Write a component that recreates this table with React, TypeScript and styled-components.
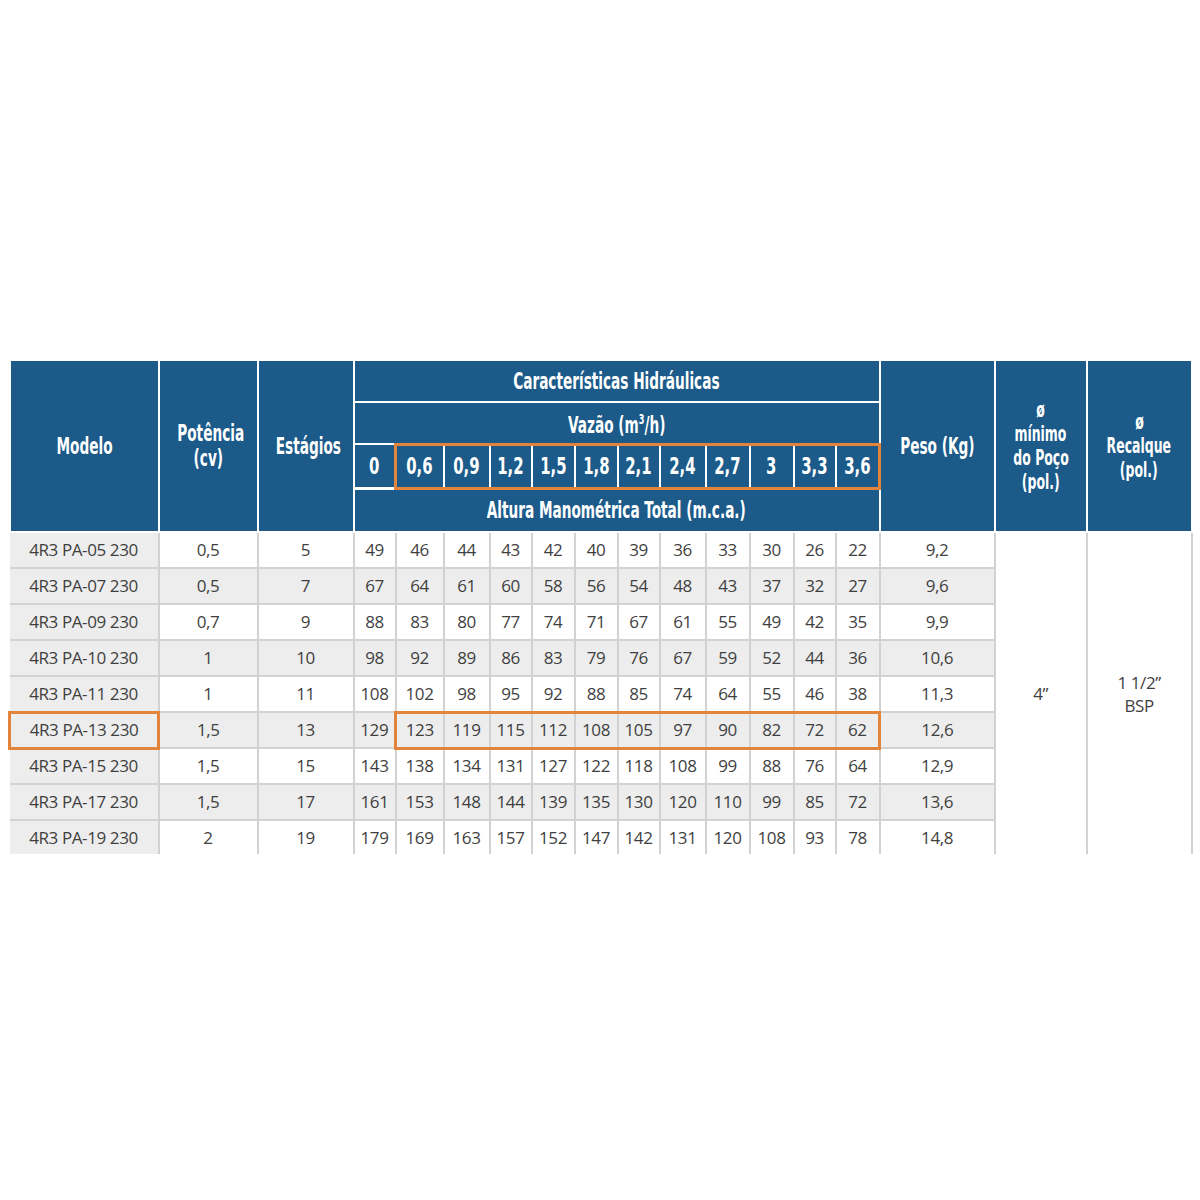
import React from "react";
import styled, { createGlobalStyle, css } from "styled-components";

const GlobalStyle = createGlobalStyle`
  html, body { margin: 0; padding: 0; background: #ffffff; }
  body { font-family: "Open Sans", "Liberation Sans", sans-serif; }
`;

const BLUE = "#1b5a89";
const ORANGE = "#e3843c";
const GRID = "#d2d2d2";
const STRIPE = "#ededed";

const Page = styled.div`
  width: 1200px;
  height: 1200px;
  padding: 359px 0 0 8px;
  box-sizing: border-box;
`;

const Table = styled.table`
  border-collapse: collapse;
  table-layout: fixed;
  width: 1182px;
`;

type Edge = { hlTop?: boolean; hlBottom?: boolean; hlLeft?: boolean; hlRight?: boolean };

const edges = css<Edge>`
  ${(p) => p.hlTop && `border-top: 3px solid ${ORANGE};`}
  ${(p) => p.hlBottom && `border-bottom: 3px solid ${ORANGE};`}
  ${(p) => p.hlLeft && `border-left: 3px solid ${ORANGE};`}
  ${(p) => p.hlRight && `border-right: 3px solid ${ORANGE};`}
`;

const HeadCell = styled.th<Edge & { $small?: boolean }>`
  background: ${BLUE};
  color: #ffffff;
  border: 2px solid #ffffff;
  padding: 0;
  text-align: center;
  vertical-align: middle;
  font-family: "DejaVu Sans Condensed", "DejaVu Sans", sans-serif;
  font-stretch: condensed;
  font-weight: 700;
  font-size: ${(p) => (p.$small ? "21px" : "23px")};
  line-height: ${(p) => (p.$small ? "24px" : "25px")};
  white-space: nowrap;
  overflow: hidden;
  ${edges}
`;

const Squeeze = styled.span<{ $x?: number }>`
  display: inline-block;
  transform: scaleX(${(p) => p.$x ?? 0.66});
  transform-origin: center;
`;

const Sup = styled.sup`
  font-size: 0.6em;
`;

const HeadRow = styled.tr<{ $h: number }>`
  height: ${(p) => p.$h}px;
`;

const BodyRow = styled.tr<{ $stripe: boolean; $h: number }>`
  height: ${(p) => p.$h}px;
  background: ${(p) => (p.$stripe ? STRIPE : "#ffffff")};
`;

const Cell = styled.td<Edge & { $model?: boolean; $merged?: boolean }>`
  border: 2px solid ${GRID};
  padding: 0;
  text-align: center;
  vertical-align: middle;
  color: #3f3f3f;
  font-family: "Open Sans", "Liberation Sans", sans-serif;
  font-size: 17px;
  letter-spacing: -0.4px;
  line-height: 20px;
  white-space: nowrap;
  ${(p) => p.$model && `background: ${STRIPE}; border-left: none;`}
  ${(p) => p.$merged && `background: #ffffff; border-bottom: none; line-height: 23px;`}
  ${edges}
`;

const LastRowCell = styled(Cell)`
  border-bottom: none;
`;

const flows = ["0", "0,6", "0,9", "1,2", "1,5", "1,8", "2,1", "2,4", "2,7", "3", "3,3", "3,6"];
const flowWidths = [42, 48, 46, 42, 43, 43, 42, 46, 44, 44, 42, 44];

type Row = [string, string, string, number[], string];
const rows: Row[] = [
  ["4R3 PA-05 230", "0,5", "5", [49, 46, 44, 43, 42, 40, 39, 36, 33, 30, 26, 22], "9,2"],
  ["4R3 PA-07 230", "0,5", "7", [67, 64, 61, 60, 58, 56, 54, 48, 43, 37, 32, 27], "9,6"],
  ["4R3 PA-09 230", "0,7", "9", [88, 83, 80, 77, 74, 71, 67, 61, 55, 49, 42, 35], "9,9"],
  ["4R3 PA-10 230", "1", "10", [98, 92, 89, 86, 83, 79, 76, 67, 59, 52, 44, 36], "10,6"],
  ["4R3 PA-11 230", "1", "11", [108, 102, 98, 95, 92, 88, 85, 74, 64, 55, 46, 38], "11,3"],
  ["4R3 PA-13 230", "1,5", "13", [129, 123, 119, 115, 112, 108, 105, 97, 90, 82, 72, 62], "12,6"],
  ["4R3 PA-15 230", "1,5", "15", [143, 138, 134, 131, 127, 122, 118, 108, 99, 88, 76, 64], "12,9"],
  ["4R3 PA-17 230", "1,5", "17", [161, 153, 148, 144, 139, 135, 130, 120, 110, 99, 85, 72], "13,6"],
  ["4R3 PA-19 230", "2", "19", [179, 169, 163, 157, 152, 147, 142, 131, 120, 108, 93, 78], "14,8"],
];

const HIGHLIGHT_ROW = 5;

export default function App() {
  return (
    <>
      <GlobalStyle />
      <Page>
        <Table>
          <colgroup>
            <col style={{ width: 149 }} />
            <col style={{ width: 99 }} />
            <col style={{ width: 96 }} />
            {flowWidths.map((w, i) => (
              <col key={i} style={{ width: w }} />
            ))}
            <col style={{ width: 115 }} />
            <col style={{ width: 92 }} />
            <col style={{ width: 105 }} />
          </colgroup>
          <thead>
            <HeadRow $h={42}>
              <HeadCell rowSpan={4}>
                <Squeeze>Modelo</Squeeze>
              </HeadCell>
              <HeadCell rowSpan={4}>
                <Squeeze>Potência</Squeeze>
                <br />
                <Squeeze>(cv)</Squeeze>
              </HeadCell>
              <HeadCell rowSpan={4}>
                <Squeeze>Estágios</Squeeze>
              </HeadCell>
              <HeadCell colSpan={12}>
                <Squeeze>Características Hidráulicas</Squeeze>
              </HeadCell>
              <HeadCell rowSpan={4}>
                <Squeeze>Peso (Kg)</Squeeze>
              </HeadCell>
              <HeadCell rowSpan={4} $small>
                <Squeeze>ø</Squeeze>
                <br />
                <Squeeze>mínimo</Squeeze>
                <br />
                <Squeeze>do Poço</Squeeze>
                <br />
                <Squeeze>(pol.)</Squeeze>
              </HeadCell>
              <HeadCell rowSpan={4} $small>
                <Squeeze>ø</Squeeze>
                <br />
                <Squeeze>Recalque</Squeeze>
                <br />
                <Squeeze>(pol.)</Squeeze>
              </HeadCell>
            </HeadRow>
            <HeadRow $h={42}>
              <HeadCell colSpan={12}>
                <Squeeze>
                  Vazão (m<Sup>3</Sup>/h)
                </Squeeze>
              </HeadCell>
            </HeadRow>
            <HeadRow $h={44}>
              {flows.map((f, i) => (
                <HeadCell
                  key={f}
                  hlTop={i > 0}
                  hlBottom={i > 0}
                  hlLeft={i === 1}
                  hlRight={i === flows.length - 1}
                >
                  <Squeeze $x={0.72}>{f}</Squeeze>
                </HeadCell>
              ))}
            </HeadRow>
            <HeadRow $h={44}>
              <HeadCell colSpan={12}>
                <Squeeze>Altura Manométrica Total (m.c.a.)</Squeeze>
              </HeadCell>
            </HeadRow>
          </thead>
          <tbody>
            {rows.map(([model, power, stages, values, weight], r) => {
              const hl = r === HIGHLIGHT_ROW;
              const last = r === rows.length - 1;
              const C = last ? LastRowCell : Cell;
              return (
                <BodyRow key={model} $stripe={r % 2 === 1} $h={last ? 34 : 36}>
                  <C $model hlTop={hl} hlBottom={hl} hlLeft={hl} hlRight={hl}>
                    {model}
                  </C>
                  <C>{power}</C>
                  <C>{stages}</C>
                  {values.map((v, i) => (
                    <C
                      key={i}
                      hlTop={hl && i > 0}
                      hlBottom={hl && i > 0}
                      hlLeft={hl && i === 1}
                      hlRight={hl && i === values.length - 1}
                    >
                      {v}
                    </C>
                  ))}
                  <C>{weight}</C>
                  {r === 0 && (
                    <>
                      <Cell rowSpan={rows.length} $merged>
                        4”
                      </Cell>
                      <Cell rowSpan={rows.length} $merged>
                        1 1/2”
                        <br />
                        BSP
                      </Cell>
                    </>
                  )}
                </BodyRow>
              );
            })}
          </tbody>
        </Table>
      </Page>
    </>
  );
}
